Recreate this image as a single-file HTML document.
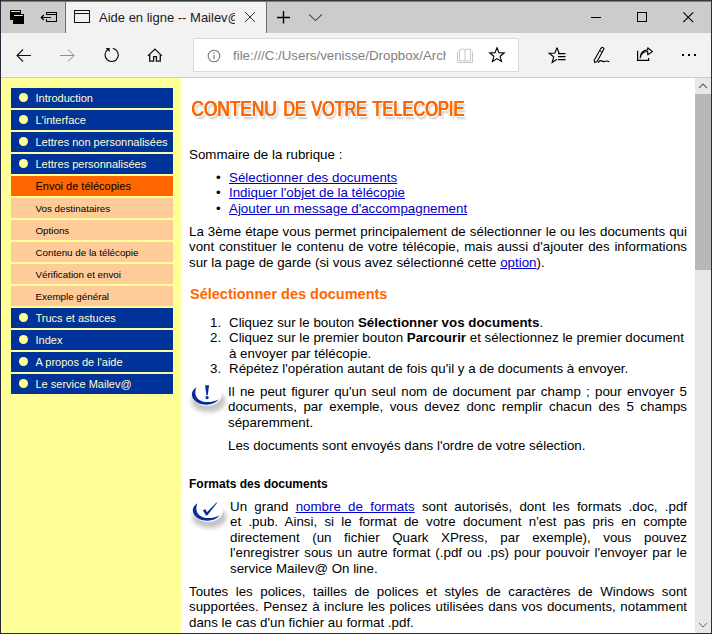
<!DOCTYPE html>
<html><head><meta charset="utf-8">
<style>
*{margin:0;padding:0;box-sizing:border-box}
html,body{width:712px;height:634px;overflow:hidden;background:#fff;font-family:"Liberation Sans",sans-serif}
.a{position:absolute}
#frame{position:absolute;left:0;top:0;width:712px;height:634px;overflow:hidden}
/* tab bar */
#tabbar{left:1px;top:2px;width:710px;height:31px;background:#cccccc}
#tab{left:65px;top:2px;width:202px;height:31px;background:#f2f2f2;border-left:1px solid #6e6e6e;border-right:1px solid #6e6e6e;border-bottom:none}
#toolbar{left:1px;top:33px;width:710px;height:44px;background:#f2f2f2}
#tbline{left:1px;top:77px;width:710px;height:1px;background:#cccccc}
#addr{left:193px;top:38px;width:326px;height:34px;background:#fff;border:1px solid #d9d9d9}
.ttl{font-size:13px;color:#000;white-space:nowrap;overflow:hidden}
/* content */
#side{left:1px;top:78px;width:180px;height:555px;background:#ffff99}
#main{left:181px;top:78px;width:514px;height:555px;background:#fff}
#sb{left:695px;top:78px;width:16px;height:555px;background:#e8e8e8}
#thumb{left:695px;top:94px;width:16px;height:176px;background:#b8b8b8}
.nav{position:absolute;left:11px;width:162px;height:20px;font-size:11px;line-height:20px;white-space:nowrap}
.nav span{position:absolute;left:24.5px;top:0}
.b{background:#003399;color:#ffffcc}
.b:before{content:"";position:absolute;left:8px;top:5px;width:9px;height:9px;border-radius:50%;background:#ffff99}
.o{background:#ff6600;color:#000}
.p{background:#ffcc99;color:#000;font-size:9.8px}
.p span{top:0.6px}
/* text */
.t{position:absolute;font-size:13.33px;line-height:15.45px;color:#000;text-align:justify;white-space:normal}
.t a{color:#0000cc;text-decoration:underline}
.h1{font-size:22px;line-height:26px;font-weight:normal;color:#ff6600;white-space:nowrap;transform-origin:0 0;text-shadow:1.1px 0 0 #ff6600,0.55px 0.3px 0 #ff6600,2px 1.4px 0 #fff,3.4px 3px 2.5px rgba(0,0,0,.25)}
.h2{position:absolute;font-size:14.5px;font-weight:bold;color:#ff6600;white-space:nowrap}
.h3{position:absolute;font-size:12px;font-weight:bold;color:#000;white-space:nowrap}
.li{position:absolute;left:189px;width:498px}
</style></head><body>
<div id="frame">
<!-- window border -->
<div class="a" style="left:0;top:0;width:712px;height:1px;background:#2e3c32"></div>
<div class="a" style="left:0;top:1px;width:712px;height:1px;background:#c646bd"></div>
<div class="a" style="left:0;top:0;width:1px;height:634px;background:#2a2b3a"></div>
<div class="a" style="left:711px;top:0;width:1px;height:634px;background:#2e2e2e"></div>
<div class="a" style="left:0;top:633px;width:712px;height:1px;background:#2a2b3a"></div>

<div id="tabbar" class="a"></div>
<div id="tab" class="a"></div>
<!-- tab set icon -->
<svg class="a" style="left:9px;top:9px" width="17" height="17" viewBox="0 0 17 17">
<rect x="1" y="1" width="11" height="10" fill="#000"/>
<rect x="2" y="2" width="9" height="1" fill="#ddd"/>
<rect x="4" y="5" width="11" height="10" fill="#000"/>
<rect x="5" y="6" width="9" height="1" fill="#ddd"/>
</svg>
<!-- set aside icon -->
<svg class="a" style="left:40px;top:11px" width="19" height="13" viewBox="0 0 19 13" shape-rendering="crispEdges">
<path d="M6.5 4V1.5H16.5V10.5H6.5V8" fill="none" stroke="#000" stroke-width="1.2"/>
<path d="M6.5 3.5H16.5" stroke="#000" stroke-width="1.1"/>
</svg>
<svg class="a" style="left:40px;top:11px" width="19" height="13" viewBox="0 0 19 13">
<path d="M1.3 6.5H11M3.8 4L1.3 6.5L3.8 9" fill="none" stroke="#000" stroke-width="1.2"/>
</svg>
<!-- tab favicon -->
<svg class="a" style="left:73px;top:9px" width="18" height="15" viewBox="0 0 18 15" shape-rendering="crispEdges">
<path d="M1.5 1.5H16.5V13.5H1.5Z M1.5 4.5H16.5" fill="none" stroke="#111" stroke-width="1.2"/>
</svg>
<div class="a ttl" style="left:99px;top:9px;width:136px;line-height:18px;color:#1a1a1a">Aide en ligne -- Mailev@</div>
<svg class="a" style="left:244px;top:11px" width="12" height="12" viewBox="0 0 12 12"><path d="M1 1L11 11M11 1L1 11" stroke="#333" stroke-width="1"/></svg>
<svg class="a" style="left:276px;top:10px" width="15" height="14" viewBox="0 0 15 14"><path d="M7.5 1V13.5M1 7.5H14" stroke="#000" stroke-width="1.4"/></svg>
<svg class="a" style="left:307px;top:13px" width="16" height="10" viewBox="0 0 16 10"><path d="M2 1.3L8.5 7.6L15 1.3" fill="none" stroke="#444" stroke-width="1.1"/></svg>
<!-- window controls -->
<div class="a" style="left:591px;top:17px;width:10px;height:1px;background:#000"></div>
<div class="a" style="left:637px;top:12px;width:10px;height:10px;border:1px solid #000"></div>
<svg class="a" style="left:682px;top:11px" width="13" height="13" viewBox="0 0 13 13"><path d="M1.3 1.3L11.2 11.2M11.2 1.3L1.3 11.2" stroke="#000" stroke-width="1.1"/></svg>

<div id="toolbar" class="a"></div>
<div id="tbline" class="a"></div>
<!-- back -->
<svg class="a" style="left:15px;top:48px" width="17" height="15" viewBox="0 0 17 15"><path d="M16 7.5H2M8 1.5L2 7.5L8 13.5" fill="none" stroke="#111" stroke-width="1.1"/></svg>
<svg class="a" style="left:59px;top:48px" width="17" height="15" viewBox="0 0 17 15"><path d="M1 7.5H15M9 1.5L15 7.5L9 13.5" fill="none" stroke="#8c8c8c" stroke-width="1"/></svg>
<!-- refresh -->
<svg class="a" style="left:100px;top:44px" width="24" height="22" viewBox="100 44 24 22"><path d="M112.8 48.4A6.6 6.6 0 1 1 107.7 49.6" fill="none" stroke="#111" stroke-width="1.2"/><path d="M105.5 47.9H109.7V52.1Z" fill="#111"/></svg>
<!-- home -->
<svg class="a" style="left:144px;top:44px" width="24" height="22" viewBox="144 44 24 22"><path d="M147.9 55.9L154.9 49.1L161.9 55.9M149.7 54.3V61.1H153.6V56.6H156.4V61.1H160.3V54.3" fill="none" stroke="#111" stroke-width="1.3"/></svg>

<div id="addr" class="a"></div>
<svg class="a" style="left:207px;top:49px" width="14" height="14" viewBox="0 0 14 14"><circle cx="7" cy="7" r="5.8" fill="none" stroke="#777" stroke-width="1.1"/><rect x="6.4" y="6" width="1.2" height="4.2" fill="#777"/><rect x="6.4" y="3.6" width="1.2" height="1.2" fill="#777"/></svg>
<div class="a ttl" style="left:233px;top:47px;width:213px;line-height:18px;color:#808080;font-size:13.3px">file:///C:/Users/venisse/Dropbox/Archives</div>
<!-- reading view -->
<svg class="a" style="left:456px;top:47px" width="18" height="17" viewBox="0 0 18 17" fill="none" stroke="#c8c8c8" stroke-width="1">
<path d="M1.5 4.5V15.5H16.5V4.5"/>
<path d="M3.5 2.5Q6.5 1.3 9 2.8Q11.5 1.3 14.5 2.5V14Q11.5 13 9 14.2Q6.5 13 3.5 14Z"/>
<path d="M9 2.8V14.2"/>
</svg>
<!-- star -->
<svg class="a" style="left:488px;top:46px" width="18" height="18" viewBox="0 0 18 18"><path d="M9.00 1.70L10.94 6.63L16.23 6.95L12.14 10.32L13.47 15.45L9.00 12.60L4.53 15.45L5.86 10.32L1.77 6.95L7.06 6.63Z" fill="none" stroke="#000" stroke-width="1.15" stroke-linejoin="miter"/></svg>
<!-- favorites list -->
<svg class="a" style="left:544px;top:42px" width="26" height="26" viewBox="544 42 26 26"><path d="M557 47.6L554.9 53L549.2 53.3L553.7 56.9L552.2 62.4L557 59.3M557 47.6L559 53" fill="none" stroke="#000" stroke-width="1.2" stroke-linejoin="miter"/><path d="M558 53.6H565.5M558 56.6H565.5M558 59.6H565.5" stroke="#000" stroke-width="1.2"/></svg>
<!-- pen -->
<svg class="a" style="left:593px;top:46px" width="18" height="18" viewBox="0 0 18 18"><path d="M8 2.3Q9.8 0.4 11.1 2.6L4.3 15.2L1.8 16.6L1.2 14.3Z" fill="none" stroke="#000" stroke-width="1.1" stroke-linejoin="round"/><path d="M7 5L9.5 6.2" stroke="#000" stroke-width="0.9"/><path d="M5.2 16.6Q6.8 14 8.5 14.8Q10.5 16.2 12.5 15.3Q14 14.6 16.3 15.8" fill="none" stroke="#000" stroke-width="1.1"/></svg>
<!-- share -->
<svg class="a" style="left:630px;top:42px" width="26" height="26" viewBox="630 42 26 26"><path d="M637.6 50.8V60.3H648.6V58" fill="none" stroke="#000" stroke-width="1.2"/><path d="M640.2 57.8Q641.5 51.5 647.7 51.5V54.8L652.5 51.6L647.7 47.8V49.9Q640.5 50.5 640.2 57.8Z" fill="none" stroke="#000" stroke-width="1.1" stroke-linejoin="round"/></svg>
<!-- dots -->
<div class="a" style="left:682px;top:54px;width:2px;height:2px;background:#000"></div>
<div class="a" style="left:688px;top:54px;width:2px;height:2px;background:#000"></div>
<div class="a" style="left:694px;top:54px;width:2px;height:2px;background:#000"></div>

<!-- content -->
<div id="side" class="a"></div>
<div id="main" class="a"></div>
<div id="sb" class="a"></div>
<div id="thumb" class="a"></div>
<svg class="a" style="left:698px;top:83px" width="10" height="6" viewBox="0 0 10 6"><path d="M1 5L5 1L9 5" fill="none" stroke="#606060" stroke-width="1.1"/></svg>
<svg class="a" style="left:698px;top:622px" width="10" height="6" viewBox="0 0 10 6"><path d="M1 1L5 5L9 1" fill="none" stroke="#6a6a6a" stroke-width="1"/></svg>

<div class="nav b" style="top:88px"><span>Introduction</span></div>
<div class="nav b" style="top:110px"><span>L'interface</span></div>
<div class="nav b" style="top:132px"><span>Lettres non personnalisées</span></div>
<div class="nav b" style="top:154px"><span>Lettres personnalisées</span></div>
<div class="nav o" style="top:176px"><span>Envoi de télécopies</span></div>
<div class="nav p" style="top:198px"><span>Vos destinataires</span></div>
<div class="nav p" style="top:220px"><span>Options</span></div>
<div class="nav p" style="top:242px"><span>Contenu de la télécopie</span></div>
<div class="nav p" style="top:264px"><span>Vérification et envoi</span></div>
<div class="nav p" style="top:286px"><span>Exemple général</span></div>
<div class="nav b" style="top:308px"><span>Trucs et astuces</span></div>
<div class="nav b" style="top:330px"><span>Index</span></div>
<div class="nav b" style="top:352px"><span>A propos de l'aide</span></div>
<div class="nav b" style="top:374px"><span>Le service Mailev@</span></div>

<div class="h1 a" style="left:191.2px;top:95.5px;transform:scaleX(0.785)">CONTENU</div><div class="h1 a" style="left:283.1px;top:95.5px;transform:scaleX(0.734)">DE</div><div class="h1 a" style="left:311.2px;top:95.5px;transform:scaleX(0.733)">VOTRE</div><div class="h1 a" style="left:372.4px;top:95.5px;transform:scaleX(0.745)">TELECOPIE</div>

<div class="t" style="left:189px;top:147px;width:498px">Sommaire de la rubrique :</div>
<div class="t" style="left:189px;top:170px;width:498px">
<div style="position:relative"><span class="a" style="left:27px;top:0">&#8226;</span><span style="margin-left:40px"><a>Sélectionner des documents</a></span></div>
<div style="position:relative"><span class="a" style="left:27px;top:0">&#8226;</span><span style="margin-left:40px"><a>Indiquer l'objet de la télécopie</a></span></div>
<div style="position:relative"><span class="a" style="left:27px;top:0">&#8226;</span><span style="margin-left:40px"><a>Ajouter un message d'accompagnement</a></span></div>
</div>
<div class="t" style="left:189px;top:224px;width:498px">La 3ème étape vous permet principalement de sélectionner le ou les documents qui vont constituer le contenu de votre télécopie, mais aussi d'ajouter des informations sur la page de garde (si vous avez sélectionné cette <a>option</a>).</div>

<div class="h2" style="left:190px;top:286px">Sélectionner des documents</div>

<div class="t" style="left:189px;top:315px;width:498px;text-align:left">
<div style="position:relative;padding-left:40px"><span class="a" style="left:21px;top:0">1.</span>Cliquez sur le bouton <b>Sélectionner vos documents</b>.</div>
<div style="position:relative;padding-left:40px"><span class="a" style="left:21px;top:0">2.</span>Cliquez sur le premier bouton <b>Parcourir</b> et sélectionnez le premier document à envoyer par télécopie.</div>
<div style="position:relative;padding-left:40px"><span class="a" style="left:21px;top:0">3.</span>Répétez l'opération autant de fois qu'il y a de documents à envoyer.</div>
</div>

<svg class="a" style="left:186px;top:380px" width="44" height="36" viewBox="186 380 44 36">
<defs><filter id="bl" x="-40%" y="-40%" width="180%" height="180%"><feGaussianBlur stdDeviation="2.2"/></filter></defs>
<ellipse cx="208.5" cy="401.5" rx="17" ry="10.5" fill="#8a8a8a" filter="url(#bl)" opacity=".5"/>
<ellipse cx="207" cy="395.2" rx="14.6" ry="10.6" fill="#fff"/>
<path d="M196.4 387.2C193.2 389.3 191.5 392 191.9 395.2C192.6 400.6 199 404.8 206.5 404.7C211.8 404.6 216.3 402.6 218.9 399.3C215.5 401.2 211 402.3 206.5 402.1C201.5 401.8 197.5 399.8 196 396C195 393.2 195.2 390.2 196.4 387.2Z" fill="#0a2a9c"/>
<path d="M205.1 385.2H209.1L207.7 395.3H206.4Z" fill="#0a2a9c"/>
<circle cx="207.1" cy="397.6" r="1.6" fill="#0a2a9c"/>
</svg>
<div class="t" style="left:228px;top:384px;width:459px">Il ne peut figurer qu'un seul nom de document par champ ; pour envoyer 5 documents, par exemple, vous devez donc remplir chacun des 5 champs séparemment.</div>
<div class="t" style="left:228px;top:438px;width:459px">Les documents sont envoyés dans l'ordre de votre sélection.</div>

<div class="h3" style="left:189px;top:477px">Formats des documents</div>

<svg class="a" style="left:187px;top:496px" width="44" height="36" viewBox="186 380 44 36">
<ellipse cx="208.5" cy="401.5" rx="17" ry="10.5" fill="#8a8a8a" filter="url(#bl)" opacity=".5"/>
<ellipse cx="207" cy="395.2" rx="14.6" ry="10.6" fill="#fff"/>
<path d="M196.4 387.2C193.2 389.3 191.5 392 191.9 395.2C192.6 400.6 199 404.8 206.5 404.7C211.8 404.6 216.3 402.6 218.9 399.3C215.5 401.2 211 402.3 206.5 402.1C201.5 401.8 197.5 399.8 196 396C195 393.2 195.2 390.2 196.4 387.2Z" fill="#0a2a9c"/>
<path d="M201.8 394.2L204.6 393.3L205.9 396.3L215.2 386.8L216.3 386.6L206.2 399.6H205Z" fill="#0a2a9c"/>
</svg>
<div class="t" style="left:230px;top:499px;width:457px">Un grand <a>nombre de formats</a> sont autorisés, dont les formats .doc, .pdf et&nbsp;.pub. Ainsi, si le format de votre document n'est pas pris en compte directement (un fichier Quark XPress, par exemple), vous pouvez l'enregistrer sous un autre format (.pdf ou .ps) pour pouvoir l'envoyer par le service Mailev@ On line.</div>
<div class="t" style="left:189px;top:584px;width:498px">Toutes les polices, tailles de polices et styles de caractères de Windows sont supportées. Pensez à inclure les polices utilisées dans vos documents, notamment dans le cas d'un fichier au format .pdf.</div>
</div>
</body></html>
